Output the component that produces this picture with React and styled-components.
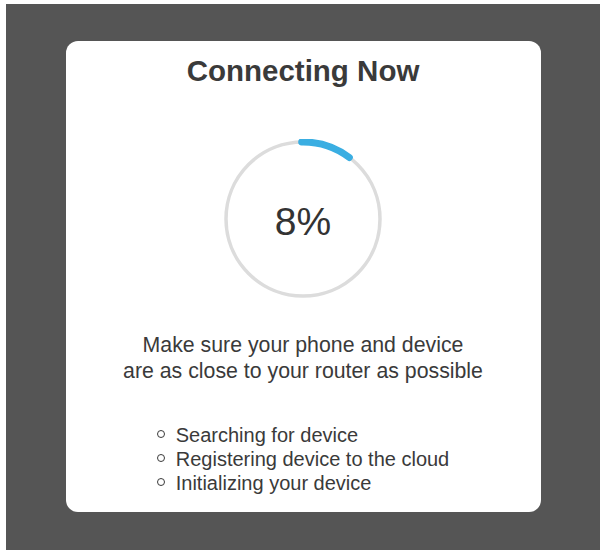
import React from 'react';
import styled, { createGlobalStyle } from 'styled-components';

const GlobalStyle = createGlobalStyle`
  html, body {
    margin: 0;
    padding: 0;
    background: #ffffff;
  }
  body {
    font-family: "Liberation Sans", Arial, Helvetica, sans-serif;
  }
`;

const Frame = styled.div`
  margin: 4px 0 0 6px;
  width: 594px;
  height: 546px;
  background: #555555;
  display: flex;
  justify-content: center;
  align-items: flex-start;
  padding-top: 37px;
  box-sizing: border-box;
`;

const Card = styled.div`
  width: 475px;
  height: 471px;
  background: #ffffff;
  border-radius: 12px;
  box-sizing: border-box;
  padding-top: 13px;
  display: flex;
  flex-direction: column;
  align-items: center;
  color: #363636;
`;

const Title = styled.h1`
  margin: 0;
  font-size: 29.5px;
  line-height: 34px;
  font-weight: 700;
  color: #3a3a3a;
`;

const Dial = styled.div`
  margin-top: 51px;
  width: 160px;
  height: 160px;
  display: grid;
  place-items: center;

  & > * {
    grid-area: 1 / 1;
  }
`;

const Percent = styled.span`
  font-size: 39px;
  line-height: 40px;
  padding-top: 5px;
  color: #333333;
`;

const Note = styled.p`
  margin: 33px 0 0;
  font-size: 21.3px;
  line-height: 26px;
  text-align: center;
  color: #3a3a3a;
`;

const Steps = styled.ul`
  list-style: none;
  margin: 39px 0 0;
  padding: 0;
  font-size: 20px;
  line-height: 24px;
  color: #3a3a3a;
`;

const Step = styled.li`
  display: flex;
  align-items: center;
  gap: 11px;

  &::before {
    content: '';
    width: 6px;
    height: 6px;
    border: 1.5px solid #3a3a3a;
    border-radius: 50%;
    margin-top: -2px;
  }
`;

const R = 77;
const C = 80;

function polar(deg) {
  const a = ((deg - 90) * Math.PI) / 180;
  return [C + R * Math.cos(a), C + R * Math.sin(a)];
}

function Ring({ from, to }) {
  const [x1, y1] = polar(from);
  const [x2, y2] = polar(to);
  return (
    <svg width="160" height="160" viewBox="0 0 160 160">
      <circle cx={C} cy={C} r={R} fill="none" stroke="#dcdcdc" strokeWidth="3.5" />
      <path
        d={`M ${x1} ${y1} A ${R} ${R} 0 0 1 ${x2} ${y2}`}
        fill="none"
        stroke="#3aaee2"
        strokeWidth="7"
        strokeLinecap="round"
      />
    </svg>
  );
}

const steps = [
  'Searching for device',
  'Registering device to the cloud',
  'Initializing your device',
];

export default function App() {
  return (
    <>
      <GlobalStyle />
      <Frame>
        <Card>
          <Title>Connecting Now</Title>
          <Dial>
            <Ring from={-1} to={37} />
            <Percent>8%</Percent>
          </Dial>
          <Note>
            Make sure your phone and device
            <br />
            are as close to your router as possible
          </Note>
          <Steps>
            {steps.map((s) => (
              <Step key={s}>{s}</Step>
            ))}
          </Steps>
        </Card>
      </Frame>
    </>
  );
}
